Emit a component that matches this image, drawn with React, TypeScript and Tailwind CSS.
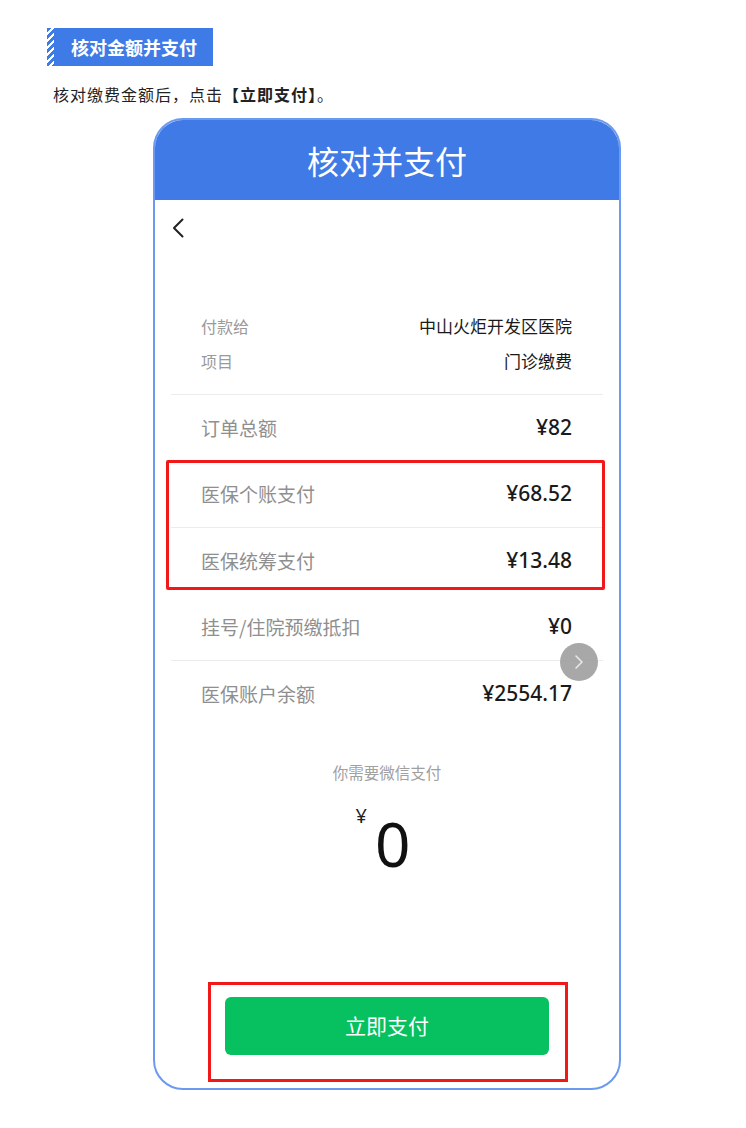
const cjk = { fontFamily: '"Noto Sans CJK SC", "Noto Sans", sans-serif' };

const rows = [
  { label: '订单总额', value: '¥82', divider: false },
  { label: '医保个账支付', value: '¥68.52', divider: true },
  { label: '医保统筹支付', value: '¥13.48', divider: false },
  { label: '挂号/住院预缴抵扣', value: '¥0', divider: true },
  { label: '医保账户余额', value: '¥2554.17', divider: false },
];

const AmountRow = ({ label, value }: { label: string; value: string }) => (
  <div className="flex h-[66px] items-center justify-between pl-[46px] pr-[47px]">
    <span className="text-[19px] text-[#8f8f8f]">{label}</span>
    <span className="text-[21px] font-medium text-[#1a1a1a]" style={{ fontFamily: '"Noto Sans", sans-serif' }}>
      {value}
    </span>
  </div>
);

export default function App() {
  return (
    <div className="min-h-[1128px] bg-white pt-[28px]" style={cjk}>
      <div className="ml-[47px] flex h-[38px] w-[166px]">
        <div className="w-[7px] bg-[repeating-linear-gradient(135deg,#3f7be6_0px,#3f7be6_3px,#ffffff_3px,#ffffff_5px)]" />
        <div className="flex flex-1 items-center bg-[#3f7be6] pl-[17px] text-[18px] font-bold text-white">
          核对金额并支付
        </div>
      </div>

      <p className="ml-[53px] mt-[16px] text-[16px] leading-[24px] tracking-[1px] text-[#222]">
        核对缴费金额后，点击<b className="font-bold">【立即支付】</b>。
      </p>

      <div className="relative ml-[153px] mt-[12px] flex h-[972px] w-[468px] flex-col overflow-hidden rounded-[30px] border-2 border-[#6b9af0] bg-white">
        <div className="flex h-[80px] shrink-0 items-center justify-center bg-[#3f7ae6] text-[32px] text-white">
          核对并支付
        </div>

        <div className="pl-[17px] pt-[18px]">
          <svg width="12" height="20" viewBox="0 0 12 20" fill="none">
            <path d="M10.5 1.5 2 10l8.5 8.5" stroke="#222" strokeWidth="2" strokeLinecap="round" strokeLinejoin="round" />
          </svg>
        </div>

        <div className="mt-[70px] flex flex-col text-[17px]">
          <div className="flex h-[35px] items-center justify-between pl-[46px] pr-[47px]">
            <span className="text-[16px] text-[#9a9a9a]">付款给</span>
            <span className="text-[#1a1a1a]">中山火炬开发区医院</span>
          </div>
          <div className="flex h-[35px] items-center justify-between pl-[46px] pr-[47px]">
            <span className="text-[16px] text-[#9a9a9a]">项目</span>
            <span className="text-[#1a1a1a]">门诊缴费</span>
          </div>
        </div>
        <div className="mx-[16px] mt-[16px] h-px bg-[#ececec]" />

        {rows.map((r) => (
          <div key={r.label}>
            <AmountRow label={r.label} value={r.value} />
            {r.divider && <div className="mx-[16px] h-px bg-[#ececec]" />}
          </div>
        ))}

        <div className="mt-[34px] text-center text-[15.5px] leading-[22px] text-[#a0a0a0]">你需要微信支付</div>
        <div className="mt-[29px] flex items-start justify-center pr-[8px]" style={{ fontFamily: '"Noto Sans", sans-serif' }}>
          <span className="mr-[8px] mt-[-6px] text-[20px] leading-none text-[#222]">¥</span>
          <span className="text-[62px] leading-none text-[#111]">0</span>
        </div>

        <div className="mt-auto mb-[33px] flex justify-center">
          <button className="flex h-[58px] w-[324px] items-center justify-center rounded-[6px] bg-[#07c160] text-[21px] text-white">
            立即支付
          </button>
        </div>

        {/* annotations */}
        <div className="absolute left-[11px] top-[340px] h-[130px] w-[439px] rounded-[2px] border-[3px] border-[#f01818]" />
        <div className="absolute left-[53px] top-[862px] h-[100px] w-[360px] border-[3px] border-[#f01818]" />
        <div className="absolute left-[405px] top-[523px] flex h-[38px] w-[38px] items-center justify-center rounded-full bg-[#9e9e9e]/90">
          <svg width="10" height="16" viewBox="0 0 10 16" fill="none">
            <path d="M2 2l6 6-6 6" stroke="#e8e8e8" strokeWidth="1.6" strokeLinecap="round" strokeLinejoin="round" />
          </svg>
        </div>
      </div>
    </div>
  );
}
